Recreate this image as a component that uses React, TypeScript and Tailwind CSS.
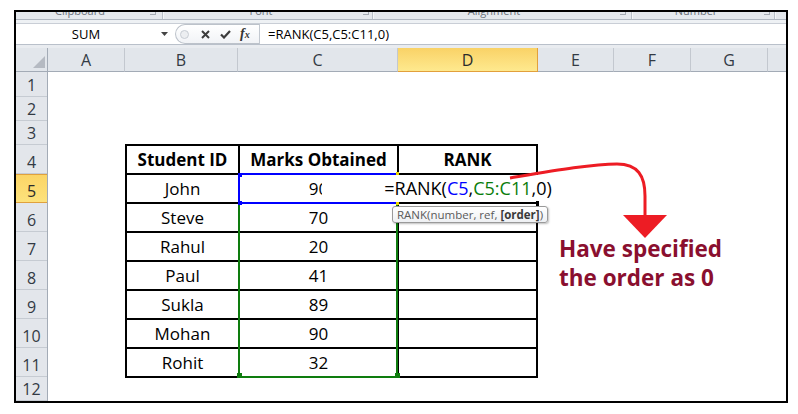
import React from "react";

const rows: [string, string][] = [
  ["John", "90"],
  ["Steve", "70"],
  ["Rahul", "20"],
  ["Paul", "41"],
  ["Sukla", "89"],
  ["Mohan", "90"],
  ["Rohit", "32"],
];

const rowHeights = [
  "h-[25px]",
  "h-[24px]",
  "h-[24px]",
  "h-[29px]",
  "h-[29px]",
  "h-[29px]",
  "h-[29px]",
  "h-[29px]",
  "h-[29px]",
  "h-[29px]",
  "h-[29px]",
  "h-[24px]",
];

function Group({ w, lw, label }: { w: string; lw: string; label: string }) {
  return (
    <div className={`${w} h-full flex border-r border-[#b9c0c9] shadow-[1px_0_0_#f4f6f8]`}>
      <div className={`${lw} text-center text-[11px] leading-[11px] -mt-[7px] text-[#6b727c] whitespace-nowrap`}>
        {label}
      </div>
      <div className="flex-1 flex justify-center">
        <div className="w-[6px] h-[3px] border-r border-b border-[#a4aab3]" />
      </div>
    </div>
  );
}

export default function App() {
  return (
    <div className="relative w-[798px] h-[414px] bg-white pt-[10px] pl-[14px] font-['Open_Sans',sans-serif] overflow-hidden">
      <div className="w-[774px] h-[393px] border-2 border-black overflow-hidden flex flex-col bg-white">
        {/* ribbon group labels strip */}
        <div className="h-[7px] flex bg-[#e4e8ed] overflow-hidden">
          <Group w="w-[147px]" lw="w-[128px]" label="Clipboard" />
          <Group w="w-[210px]" lw="w-[196px]" label="Font" />
          <Group w="w-[259px]" lw="w-[242px]" label="Alignment" />
          <Group w="w-[143px]" lw="w-[128px]" label="Number" />
          <div className="flex-1" />
        </div>
        <div className="h-px bg-[#aeb6c0]" />
        <div className="h-[3px] bg-[#eef1f4]" />
        <div className="h-px bg-[#c9ced6]" />

        {/* formula bar */}
        <div className="h-[20px] flex bg-white text-[13px] leading-[20px] text-black">
          <div className="w-[140px] text-center">SUM</div>
          <div className="w-[16px] flex items-center justify-center">
            <svg width="7" height="4" viewBox="0 0 7 4">
              <path d="M0 0 L7 0 L3.5 4 Z" fill="#444" />
            </svg>
          </div>
          <div className="w-[3px]" />
          <div className="w-[84px] h-full flex items-center rounded-l-[10px] border border-r-0 border-[#bcc2ca] bg-linear-to-b from-white to-[#f1f3f6]">
            <div className="ml-[4px] w-[9px] h-[9px] rounded-full border border-[#c8cdd4] bg-[#eceef1]" />
            <div className="ml-[12px] flex items-center">
              <svg width="9" height="9" viewBox="0 0 9 9">
                <path d="M1 1 L8 8 M8 1 L1 8" stroke="#3c3c3c" strokeWidth="2" />
              </svg>
            </div>
            <div className="ml-[10px] flex items-center">
              <svg width="11" height="9" viewBox="0 0 11 9">
                <path d="M1 4.5 L4 7.5 L10 1" stroke="#3c3c3c" strokeWidth="2.2" fill="none" />
              </svg>
            </div>
            <div className="ml-[9px] font-['Liberation_Serif',serif] italic font-bold text-[14px] leading-[20px] text-[#333]">
              f<span className="text-[10px]">x</span>
            </div>
          </div>
          <div className="w-px h-full bg-[#c2c8d0]" />
          <div className="flex-1 pl-[8px] whitespace-nowrap">=RANK(C5,C5:C11,0)</div>
        </div>
        <div className="h-px bg-[#b9c0ca]" />
        <div className="h-[3px] bg-[#e9ecf0]" />

        {/* column headers */}
        <div className="h-[24px] flex bg-[#e2e6eb] text-[16px] leading-[23px] text-[#333a44]">
          <div className="w-[32px] h-full border-r border-b border-[#a3abb6] relative flex items-end justify-end pr-[2px] pb-[3px]">
            <svg width="12" height="12" viewBox="0 0 12 12">
              <path d="M12 0 L12 12 L0 12 Z" fill="#b5bac2" />
            </svg>
          </div>
          <div className="w-[77px] h-full border-r border-b border-r-[#c3c8cf] border-b-[#a3abb6] text-center pt-[1px]">A</div>
          <div className="w-[113px] h-full border-r border-b border-r-[#c3c8cf] border-b-[#a3abb6] text-center pt-[1px]">B</div>
          <div className="w-[160px] h-full border-r border-b border-r-[#c3c8cf] border-b-[#a3abb6] text-center pt-[1px]">C</div>
          <div className="w-[140px] h-full border-r border-b border-[#e2a03c] bg-linear-to-b from-[#f9d266] to-[#fee98e] text-center pt-[1px] text-[#2b2b2b]">D</div>
          <div className="w-[76px] h-full border-r border-b border-r-[#c3c8cf] border-b-[#a3abb6] text-center pt-[1px]">E</div>
          <div className="w-[77px] h-full border-r border-b border-r-[#c3c8cf] border-b-[#a3abb6] text-center pt-[1px]">F</div>
          <div className="w-[77px] h-full border-r border-b border-r-[#c3c8cf] border-b-[#a3abb6] text-center pt-[1px]">G</div>
          <div className="flex-1 h-full border-b border-[#a3abb6]" />
        </div>

        {/* body */}
        <div className="flex flex-1 min-h-0">
          <div className="w-[32px] shrink-0 flex flex-col bg-[#e3e6eb] border-r border-[#a3abb6] text-[16px] leading-[22px] text-[#333a44]">
            {rowHeights.map((h, i) => (
              <div
                key={i}
                className={
                  i === 4
                    ? `${h} shrink-0 flex items-end justify-center border-b border-[#e0a13e] bg-linear-to-b from-[#fbd465] to-[#fde27c] shadow-[inset_0_1px_0_#e0a13e] text-[#2b2b2b]`
                    : `${h} shrink-0 flex items-end justify-center border-b border-[#c6cbd2]`
                }
              >
                {i + 1}
              </div>
            ))}
          </div>

          <div className="relative flex-1 pl-[77px] pt-[72px]">
            <div className="grid grid-cols-[111px_157px_137px] auto-rows-[27px] gap-[2px] p-[2px] bg-black w-[413px] text-[17px] leading-[27px] text-black">
              <div className="bg-white text-center font-bold">Student ID</div>
              <div className="bg-white text-center font-bold">Marks Obtained</div>
              <div className="bg-white text-center font-bold">RANK</div>
              {rows.map(([n, m]) => (
                <React.Fragment key={n}>
                  <div className="bg-white text-center">{n}</div>
                  <div className="bg-white text-center">{m}</div>
                  <div className="bg-white" />
                </React.Fragment>
              ))}
            </div>

            {/* green range C5:C11 */}
            <div className="absolute left-[190px] top-[101px] w-[160px] h-[205px] border-2 border-[#0e7c0e]" />
            <div className="absolute left-[189px] top-[301px] w-[5px] h-[5px] bg-[#0e7c0e]" />
            <div className="absolute left-[347px] top-[301px] w-[5px] h-[5px] bg-[#0e7c0e]" />

            {/* blue C5 */}
            <div className="absolute left-[190px] top-[101px] w-[160px] h-[31px] border-2 border-[#0000ff]" />
            <div className="absolute left-[190px] top-[101px] w-[4px] h-[4px] bg-[#0000ff]" />
            <div className="absolute left-[190px] top-[129px] w-[4px] h-[4px] bg-[#0000ff]" />

            {/* edit box */}
            <div className="absolute left-[274px] top-[103px] w-[292px] h-[27px] bg-white text-center text-[18px] leading-[27px] text-black whitespace-nowrap">
              =RANK(<span className="text-[#0000ff]">C5</span>,<span className="text-[#0a7d0a]">C5:C11</span>,0)
            </div>
            <div className="absolute left-[348px] top-[100px] w-[3px] h-[3px] bg-[#e8d400]" />
            <div className="absolute left-[348px] top-[130px] w-[3px] h-[3px] bg-[#e8d400]" />
            <div className="absolute left-[488px] top-[129px] w-[3px] h-[5px] bg-black" />

            {/* tooltip */}
            <div className="absolute left-[344px] top-[134px] h-[17px] px-[4px] rounded-[3px] border border-[#9a9a9a] bg-linear-to-b from-white to-[#eef0f3] shadow-[1px_1px_2px_rgba(0,0,0,0.25)] text-[11.5px] leading-[15px] text-[#5a5a5a] whitespace-nowrap">
              RANK(number, ref, <span className="font-bold text-[#3a3a3a]">[order]</span>)
            </div>
          </div>
        </div>
      </div>

      {/* red arrow annotation */}
      <svg className="absolute left-0 top-0 pointer-events-none" width="798" height="414" viewBox="0 0 798 414">
        <path
          d="M510 178 C 552 171, 592 164, 617 164 C 638 164, 645 176, 645 196 L 645 217"
          stroke="#ed1c24"
          strokeWidth="3"
          fill="none"
        />
        <polygon points="623,215 667,215 645,238" fill="#ed1c24" />
      </svg>
      <div className="absolute left-[559px] top-[234px] text-[22.5px] leading-[29px] font-bold text-[#8a0f2f] whitespace-nowrap">
        Have specified
        <br />
        the order as 0
      </div>
    </div>
  );
}
